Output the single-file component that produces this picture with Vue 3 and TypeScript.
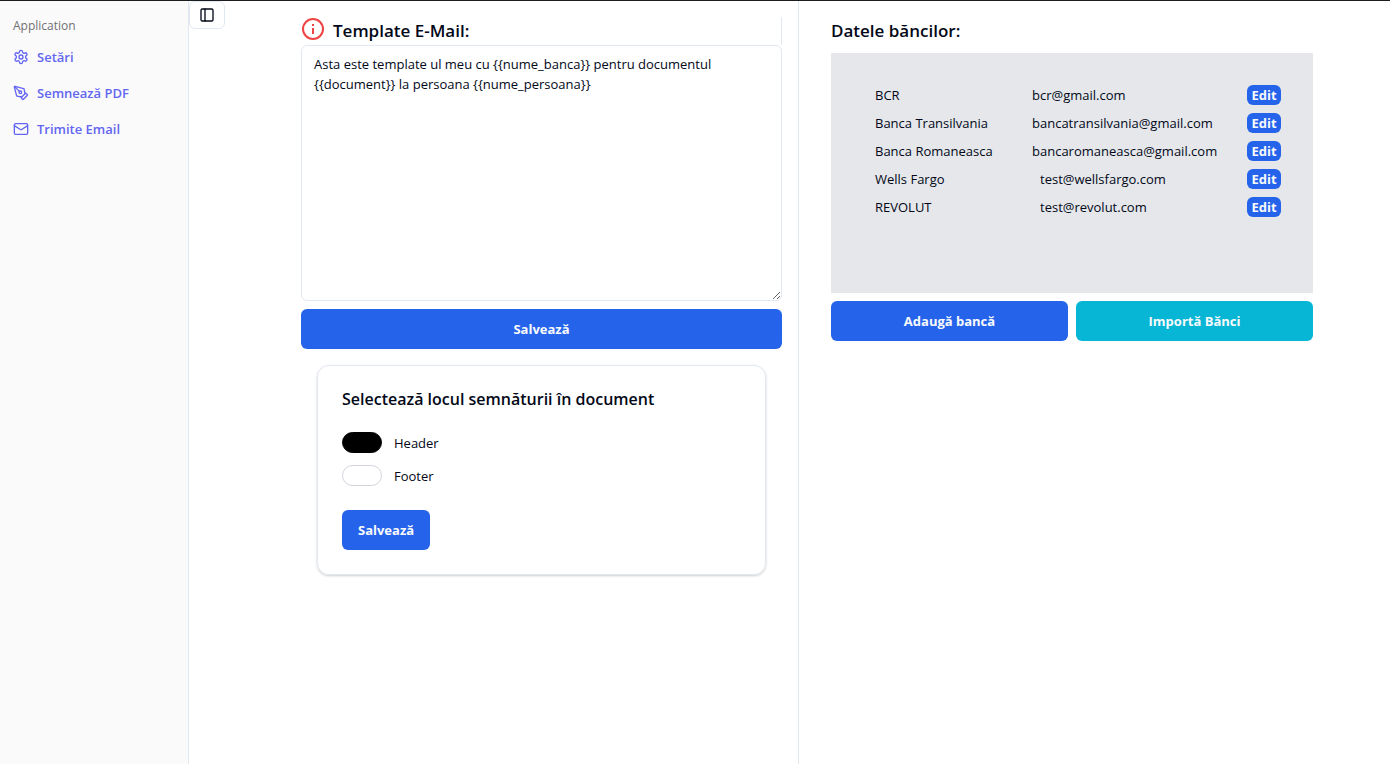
<script setup lang="ts">
import { ref } from 'vue'

interface Bank {
  name: string
  email: string
  indented?: boolean
}

const template = ref(
  'Asta este template ul meu cu {{nume_banca}} pentru documentul {{document}} la persoana {{nume_persoana}}',
)
const placement = ref<'header' | 'footer'>('header')
const sidebarOpen = ref(true)

const banks: Bank[] = [
  { name: 'BCR', email: 'bcr@gmail.com' },
  { name: 'Banca Transilvania', email: 'bancatransilvania@gmail.com' },
  { name: 'Banca Romaneasca', email: 'bancaromaneasca@gmail.com' },
  { name: 'Wells Fargo', email: 'test@wellsfargo.com', indented: true },
  { name: 'REVOLUT', email: 'test@revolut.com', indented: true },
]
</script>

<template>
  <div class="app">
    <aside v-show="sidebarOpen" class="sidebar">
      <div class="group-label">Application</div>
      <nav class="menu">
        <a href="#setari">
          <svg class="icon" viewBox="0 0 24 24" aria-hidden="true">
            <path d="M12.22 2h-.44a2 2 0 0 0-2 2v.18a2 2 0 0 1-1 1.73l-.43.25a2 2 0 0 1-2 0l-.15-.08a2 2 0 0 0-2.73.73l-.22.38a2 2 0 0 0 .73 2.73l.15.1a2 2 0 0 1 1 1.72v.51a2 2 0 0 1-1 1.74l-.15.09a2 2 0 0 0-.73 2.73l.22.38a2 2 0 0 0 2.73.73l.15-.08a2 2 0 0 1 2 0l.43.25a2 2 0 0 1 1 1.73V20a2 2 0 0 0 2 2h.44a2 2 0 0 0 2-2v-.18a2 2 0 0 1 1-1.73l.43-.25a2 2 0 0 1 2 0l.15.08a2 2 0 0 0 2.73-.73l.22-.39a2 2 0 0 0-.73-2.73l-.15-.08a2 2 0 0 1-1-1.74v-.5a2 2 0 0 1 1-1.74l.15-.09a2 2 0 0 0 .73-2.73l-.22-.38a2 2 0 0 0-2.73-.73l-.15.08a2 2 0 0 1-2 0l-.43-.25a2 2 0 0 1-1-1.73V4a2 2 0 0 0-2-2z" />
            <circle cx="12" cy="12" r="3" />
          </svg>
          <span>Setări</span>
        </a>
        <a href="#semneaza">
          <svg class="icon" viewBox="0 0 24 24" aria-hidden="true">
            <path d="M15.707 21.293a1 1 0 0 1-1.414 0l-1.586-1.586a1 1 0 0 1 0-1.414l5.586-5.586a1 1 0 0 1 1.414 0l1.586 1.586a1 1 0 0 1 0 1.414z" />
            <path d="m18 13-1.375-6.874a1 1 0 0 0-.746-.776L3.235 2.028a1 1 0 0 0-1.207 1.207L5.35 15.879a1 1 0 0 0 .776.746L13 18" />
            <path d="m2.3 2.3 7.286 7.286" />
            <circle cx="11" cy="11" r="2" />
          </svg>
          <span>Semnează PDF</span>
        </a>
        <a href="#trimite">
          <svg class="icon" viewBox="0 0 24 24" aria-hidden="true">
            <rect width="20" height="16" x="2" y="4" rx="2" />
            <path d="m22 7-8.97 5.7a1.94 1.94 0 0 1-2.06 0L2 7" />
          </svg>
          <span>Trimite Email</span>
        </a>
      </nav>
    </aside>

    <main class="main">
      <button class="trigger" type="button" aria-label="Toggle Sidebar" @click="sidebarOpen = !sidebarOpen">
        <svg class="icon" viewBox="0 0 24 24" aria-hidden="true">
          <rect width="18" height="18" x="3" y="3" rx="2" />
          <path d="M9 3v18" />
        </svg>
      </button>

      <div class="columns">
        <section class="column column-left">
          <div class="heading heading-info">
            <svg class="info" viewBox="0 0 24 24" aria-hidden="true">
              <circle cx="12" cy="12" r="10" />
              <path d="M12 11v6M12 7v2" />
            </svg>
            <label class="title" for="template">Template E-Mail:</label>
          </div>
          <textarea id="template" v-model="template" spellcheck="false"></textarea>
          <button class="btn" type="button">Salvează</button>

          <form class="card" @submit.prevent>
            <h3 class="card-title">Selectează locul semnăturii în document</h3>
            <div class="options">
              <label class="option">
                <input v-model="placement" type="radio" name="placement" value="header" />
                <span>Header</span>
              </label>
              <label class="option">
                <input v-model="placement" type="radio" name="placement" value="footer" />
                <span>Footer</span>
              </label>
            </div>
            <button class="btn" type="submit">Salvează</button>
          </form>
        </section>

        <section class="column">
          <div class="heading">
            <h2 class="title">Datele băncilor:</h2>
          </div>
          <div class="panel">
            <table>
              <tbody>
                <tr v-for="bank in banks" :key="bank.name">
                  <td class="name">{{ bank.name }}</td>
                  <td :class="{ indented: bank.indented }">{{ bank.email }}</td>
                  <td class="action"><button class="edit" type="button">Edit</button></td>
                </tr>
              </tbody>
            </table>
          </div>
          <div class="actions">
            <button class="btn" type="button">Adaugă bancă</button>
            <button class="btn btn-cyan" type="button">Importă Bănci</button>
          </div>
        </section>
      </div>
    </main>
  </div>
</template>

<style>
body {
  margin: 0;
  background: #fff;
}
</style>

<style scoped>
.app,
.app * {
  box-sizing: border-box;
}

.app {
  display: flex;
  min-height: 100vh;
  border-top: 1px solid #1c1b20;
  font-family: 'Segoe UI', 'Open Sans', 'Noto Sans', sans-serif;
  font-size: 13px;
  line-height: 20px;
  color: #020817;
}

button,
textarea {
  font: inherit;
}

.icon {
  width: 16px;
  height: 16px;
  flex: none;
  fill: none;
  stroke: currentColor;
  stroke-width: 2;
  stroke-linecap: round;
  stroke-linejoin: round;
}

.sidebar {
  flex: none;
  width: 189px;
  padding: 8px 5px;
  background: #fafafa;
  border-right: 1px solid #e2e8f0;
}

.group-label {
  height: 32px;
  padding: 0 8px;
  font-size: 12px;
  font-weight: 500;
  line-height: 34px;
  color: #717174;
}

.menu {
  display: flex;
  flex-direction: column;
  gap: 4px;
}

.menu a {
  display: flex;
  align-items: center;
  gap: 8px;
  height: 32px;
  padding: 0 8px;
  font-weight: 600;
  color: #6366f1;
  text-decoration: none;
}

.main {
  display: flex;
  flex: 1;
  min-width: 0;
  align-items: stretch;
}

.trigger {
  display: flex;
  flex: none;
  align-items: center;
  justify-content: center;
  align-self: flex-start;
  width: 36px;
  height: 28px;
  padding: 0;
  color: #020817;
  background: #fff;
  border: 1px solid #e2e8f0;
  border-radius: 6px;
}

.columns {
  display: grid;
  flex: 1;
  grid-template-columns: repeat(2, minmax(0, 1fr));
  column-gap: 16px;
  margin: 0 61px 0 60px;
}

.column {
  display: flex;
  flex-direction: column;
  padding: 16px;
}

.column-left {
  border-right: 1px solid #e2e8f0;
}

.heading {
  display: flex;
  align-items: center;
  height: 28px;
}

.heading-info {
  gap: 8px;
  border-right: 1px solid #e2e8f0;
}

.info {
  width: 24px;
  height: 24px;
  margin-bottom: 4px;
  fill: none;
  stroke: #ef4444;
  stroke-width: 2;
}

.title {
  margin: 0;
  font-size: 17px;
  font-weight: 600;
  line-height: 28px;
}

textarea {
  display: block;
  width: 100%;
  height: 256px;
  margin: 0 0 8px;
  padding: 8px 12px;
  color: inherit;
  background: #fff;
  border: 1px solid #e2e8f0;
  border-radius: 6px;
  resize: vertical;
}

.btn {
  height: 40px;
  padding: 0 16px;
  font-weight: 700;
  color: #f8fafc;
  background: #2563eb;
  border: 0;
  border-radius: 6px;
}

.btn-cyan {
  background: #06b6d4;
}

.card {
  margin: 16px 16px 0;
  padding: 24px;
  border: 1px solid #e2e8f0;
  border-radius: 12px;
  box-shadow: 0 1px 3px rgb(0 0 0 / 10%), 0 1px 2px rgb(0 0 0 / 10%);
}

.card-title {
  margin: 0;
  font-size: 16px;
  font-weight: 600;
  line-height: 18px;
}

.options {
  display: flex;
  flex-direction: column;
  gap: 12px;
  margin: 24px 0;
}

.option {
  display: flex;
  align-items: center;
  gap: 12px;
  height: 21px;
}

.option input {
  width: 40px;
  height: 21px;
  margin: 0;
  appearance: none;
  background: #fff;
  border: 1px solid #d1d5db;
  border-radius: 11px;
}

.option input:checked {
  background: #000;
  border-color: #000;
}

.panel {
  min-height: 240px;
  margin: 8px 0;
  padding: 28px 32px 28px 44px;
  background: #e5e7eb;
}

table {
  width: 100%;
  border-collapse: collapse;
}

td {
  height: 28px;
  padding: 4px 0;
}

.name {
  width: 157px;
}

.indented {
  padding-left: 8px;
}

.action {
  width: 34px;
}

.edit {
  display: block;
  width: 34px;
  height: 20px;
  padding: 0;
  font-weight: 700;
  color: #f8fafc;
  background: #2563eb;
  border: 0;
  border-radius: 6px;
}

.actions {
  display: grid;
  grid-template-columns: 1fr 1fr;
  gap: 8px;
}
</style>
